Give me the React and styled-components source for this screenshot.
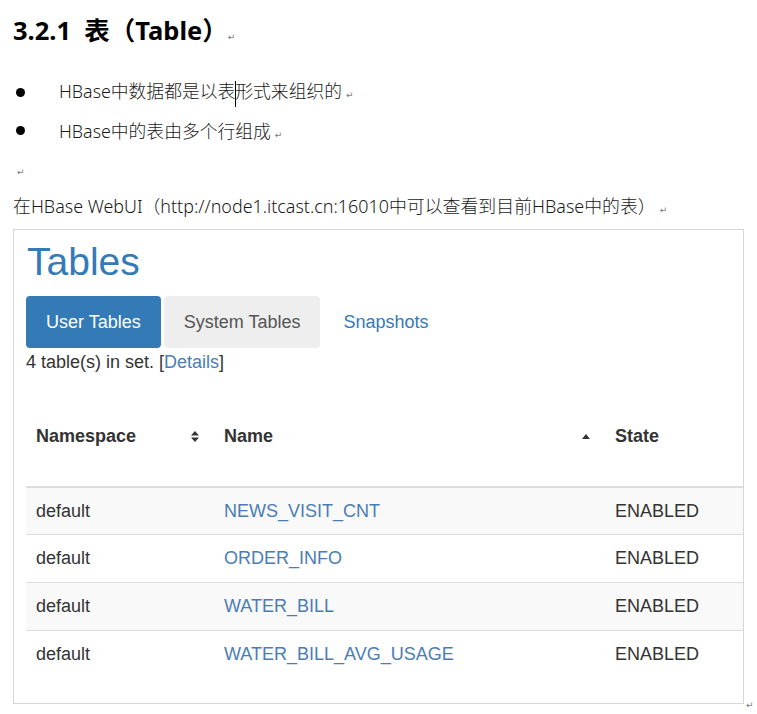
import React from 'react';
import styled, { createGlobalStyle } from 'styled-components';

const GlobalStyle = createGlobalStyle`
  html, body {
    margin: 0;
    padding: 0;
    background: #ffffff;
  }
`;

const tables = [
  { ns: 'default', name: 'NEWS_VISIT_CNT', state: 'ENABLED' },
  { ns: 'default', name: 'ORDER_INFO', state: 'ENABLED' },
  { ns: 'default', name: 'WATER_BILL', state: 'ENABLED' },
  { ns: 'default', name: 'WATER_BILL_AVG_USAGE', state: 'ENABLED' },
];

const SortBoth = () => (
  <svg width="8" height="11" viewBox="0 0 8 11">
    <path d="M4 0 L8 4.5 L0 4.5 Z" fill="#333" />
    <path d="M4 11 L8 6.5 L0 6.5 Z" fill="#333" />
  </svg>
);

const SortUp = () => (
  <svg width="8" height="5" viewBox="0 0 8 5">
    <path d="M4 0 L8 5 L0 5 Z" fill="#333" />
  </svg>
);

const App = () => (
  <Doc>
    <GlobalStyle />
    <Heading>
      3.2.1&nbsp;&nbsp;表（Table）<Mark tight>↵</Mark>
    </Heading>
    <List>
      <Item>
        <Dot />
        <span>
          HBase中数据都是以表<Caret />形式来组织的<Mark>↵</Mark>
        </span>
      </Item>
      <Item>
        <Dot />
        <span>
          HBase中的表由多个行组成<Mark>↵</Mark>
        </span>
      </Item>
    </List>
    <Para>
      <Mark>↵</Mark>
    </Para>
    <Para>
      在HBase WebUI（http://node1.itcast.cn:16010中可以查看到目前HBase中的表）<Mark>↵</Mark>
    </Para>
    <ShotRow>
      <Shot>
        <Title>Tables</Title>
        <Tabs>
          <Tab active>User Tables</Tab>
          <Tab grey>System Tables</Tab>
          <Tab>Snapshots</Tab>
        </Tabs>
        <Info>
          4 table(s) in set. [<Link>Details</Link>]
        </Info>
        <Grid>
          <HeadCell>
            Namespace
            <SortBoth />
          </HeadCell>
          <HeadCell>
            Name
            <SortUp />
          </HeadCell>
          <HeadCell>State</HeadCell>
          {tables.map((t, i) => (
            <React.Fragment key={t.name}>
              <Cell striped={i % 2 === 0} first={i === 0}>{t.ns}</Cell>
              <Cell striped={i % 2 === 0} first={i === 0}>
                <Link>{t.name}</Link>
              </Cell>
              <Cell striped={i % 2 === 0} first={i === 0}>{t.state}</Cell>
            </React.Fragment>
          ))}
        </Grid>
      </Shot>
      <EndMark>↵</EndMark>
    </ShotRow>
  </Doc>
);

export default App;

const Doc = styled.div`
  width: 757px;
  height: 714px;
  overflow: hidden;
  padding-left: 13px;
  box-sizing: border-box;
  font-family: "Noto Sans", "Noto Sans CJK SC", sans-serif;
  color: #1a1a1a;
`;

const Heading = styled.div`
  height: 60px;
  line-height: 60px;
  font-size: 25.5px;
  font-weight: bold;
  color: #000;
`;

const Mark = styled.span`
  font-family: "DejaVu Sans", sans-serif;
  font-size: 9px;
  font-weight: normal;
  color: #777;
  margin-left: ${props => (props.tight ? '0' : '4px')};
`;

const List = styled.div`
  margin-top: 13px;
`;

const Item = styled.div`
  display: flex;
  align-items: center;
  height: 38px;
  font-size: 17.8px;
  font-weight: 300;
`;

const Dot = styled.span`
  width: 9px;
  height: 9px;
  border-radius: 50%;
  background: #000;
  margin-left: 3px;
  margin-right: 34px;
  flex: none;
`;

const Caret = styled.span`
  display: inline-block;
  width: 1px;
  height: 26px;
  background: #000;
  vertical-align: middle;
  margin-right: -1px;
`;

const Para = styled.div`
  height: 38px;
  line-height: 38px;
  font-size: 17.9px;
  font-weight: 300;
`;

const ShotRow = styled.div`
  display: flex;
  align-items: flex-end;
  margin-top: 4px;
`;

const Shot = styled.div`
  width: 731px;
  height: 475px;
  box-sizing: border-box;
  border: 1px solid #d6d6d6;
  padding: 10px 0 0 12px;
  overflow: hidden;
  font-family: "Liberation Sans", Arial, sans-serif;
  color: #333;
`;

const EndMark = styled.span`
  font-family: "DejaVu Sans", sans-serif;
  font-size: 9px;
  color: #777;
  margin-left: 2px;
  margin-bottom: -6px;
`;

const Title = styled.div`
  font-size: 39px;
  line-height: 44px;
  color: #337ab7;
  padding-left: 1px;
`;

const Tabs = styled.div`
  display: flex;
  gap: 3px;
  margin-top: 12px;
`;

const Tab = styled.div`
  height: 52px;
  line-height: 52px;
  padding: 0 20px;
  font-size: 18px;
  border-radius: 4px;
  background: ${props => (props.active ? '#337ab7' : props.grey ? '#eeeeee' : 'transparent')};
  color: ${props => (props.active ? '#ffffff' : props.grey ? '#555555' : '#337ab7')};
`;

const Info = styled.div`
  height: 28px;
  line-height: 28px;
  font-size: 18px;
`;

const Link = styled.span`
  color: #4a7db5;
`;

const Grid = styled.div`
  display: grid;
  grid-template-columns: 188px 391px 140px;
  margin-top: 10px;
  font-size: 18px;
`;

const HeadCell = styled.div`
  height: 100px;
  display: flex;
  align-items: center;
  justify-content: space-between;
  padding: 0 15px 0 10px;
  font-weight: bold;
  border-bottom: 2px solid #dddddd;
`;

const Cell = styled.div`
  height: ${props => (props.first ? '46px' : '47px')};
  display: flex;
  align-items: center;
  padding: 0 10px;
  background: ${props => (props.striped ? '#f9f9f9' : '#ffffff')};
  border-top: ${props => (props.first ? 'none' : '1px solid #dddddd')};
`;
